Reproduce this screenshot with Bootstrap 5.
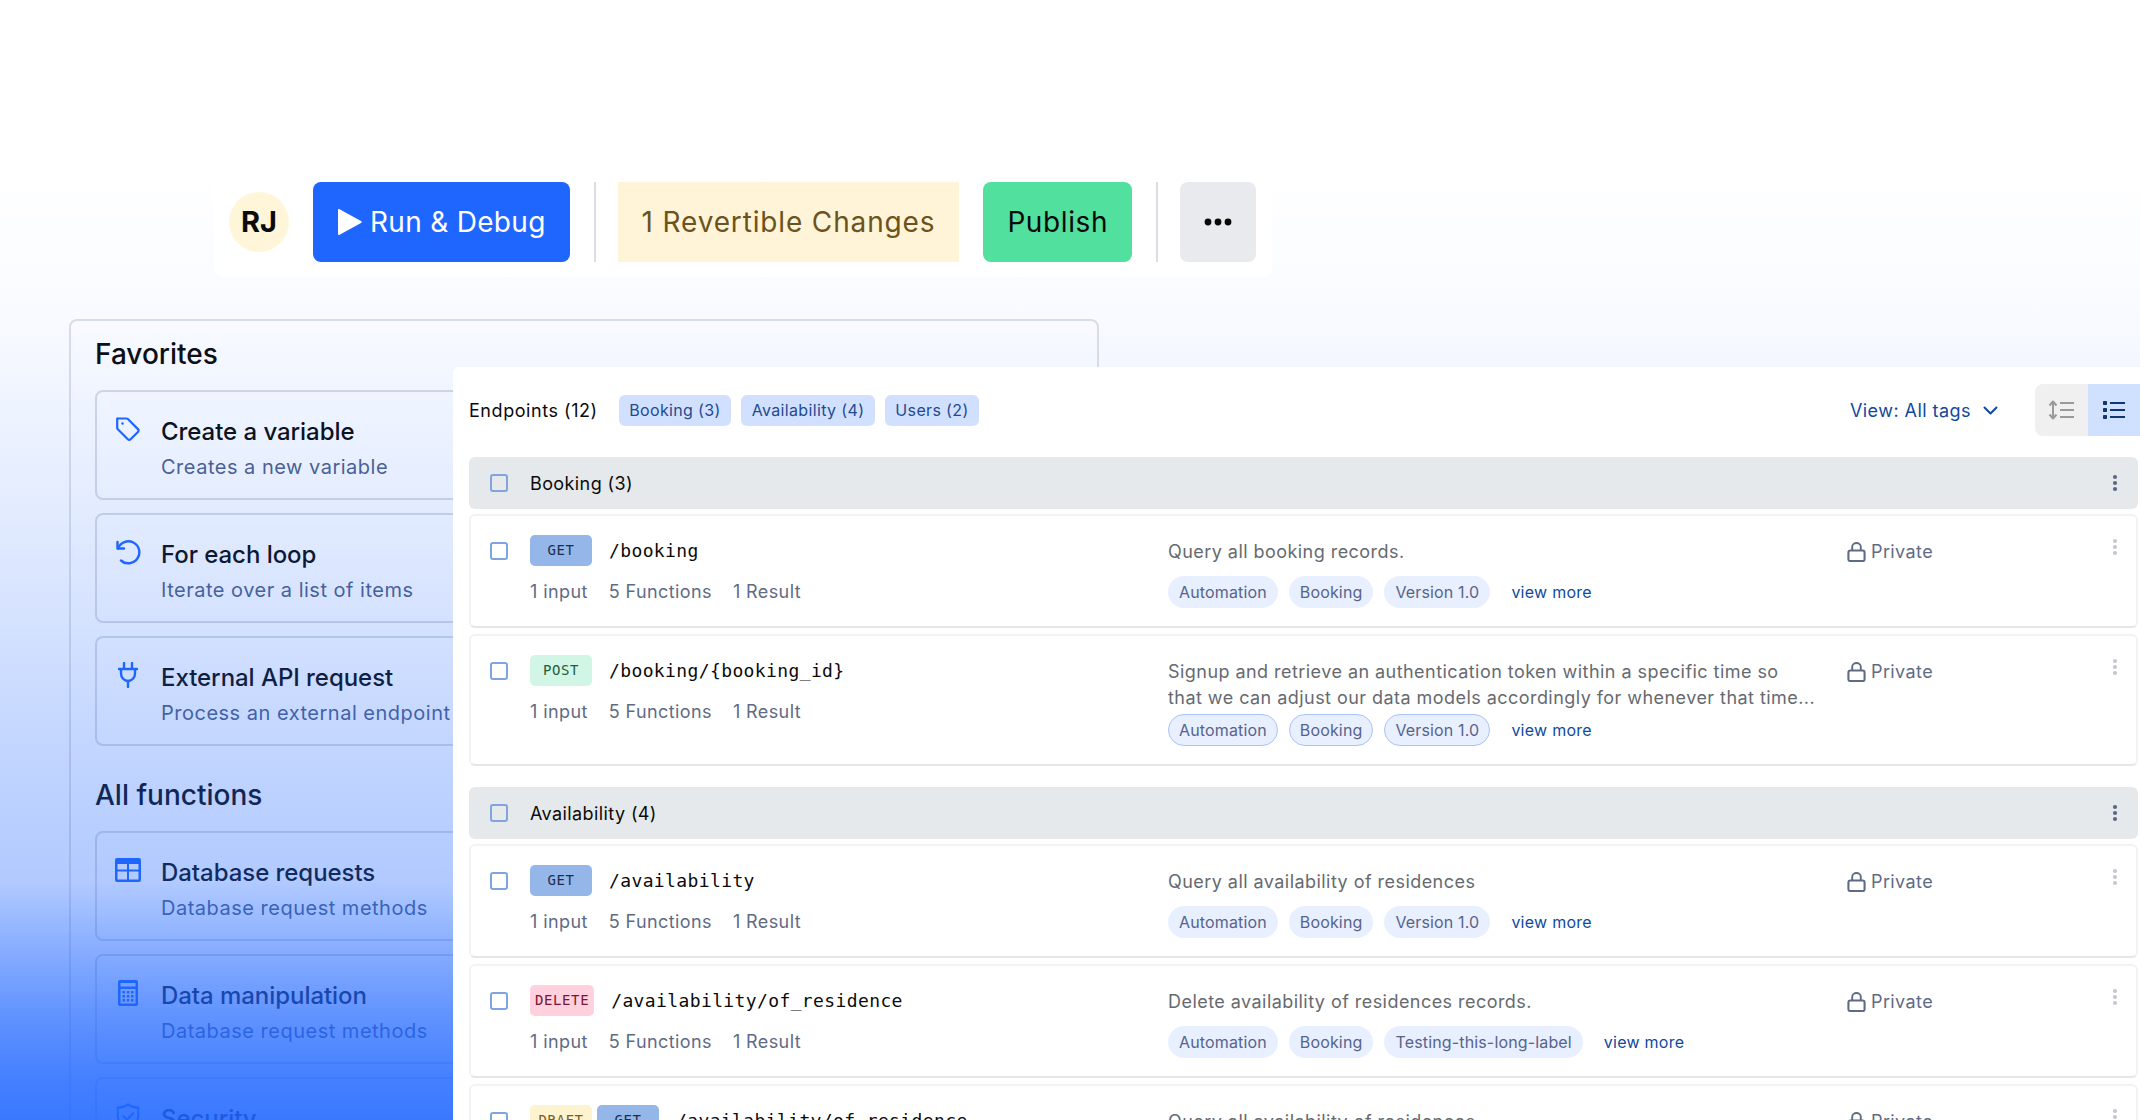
<!DOCTYPE html>
<html lang="en">
<head>
    <meta charset="UTF-8">
    <title>Endpoints</title>
    <link href="https://cdn.jsdelivr.net/npm/bootstrap@5.3.5/dist/css/bootstrap.min.css" rel="stylesheet">
    <style>
        body {
            margin: 0;
            background: #fff;
            font-family: 'Inter', sans-serif;
            color: #0b0b0b;
        }

        .app-frame {
            position: relative;
            height: 100vh;
            overflow: hidden;
        }

        /* blue fade that sits over the left panel */
        .fade-layer {
            position: absolute;
            inset: 0;
            z-index: 1;
            pointer-events: none;
            background: linear-gradient(180deg,
                rgba(31, 102, 255, 0) 15%,
                rgba(31, 102, 255, .03) 28.6%,
                rgba(31, 102, 255, .12) 44.6%,
                rgba(31, 102, 255, .19) 55.4%,
                rgba(31, 102, 255, .27) 66.5%,
                rgba(31, 102, 255, .35) 78.8%,
                rgba(31, 102, 255, .54) 85%,
                rgba(31, 102, 255, .71) 90.8%,
                rgba(31, 102, 255, .84) 96.7%,
                rgba(31, 102, 255, .88) 100%);
        }

        /* Toolbar */
        .top-bar {
            position: relative;
            z-index: 2;
            width: 1058px;
            margin: 182px 0 0 214px;
            padding: 0 15px 15px;
            gap: 24px;
            background: #fff;
            border-radius: 0 0 8px 8px;
        }

        .avatar-dot {
            width: 60px;
            height: 60px;
            border-radius: 50%;
            background: #fff6d9;
            font-size: 29px;
            font-weight: 700;
        }

        .bar-btn {
            height: 80px;
            padding: 0 24px;
            border: 0;
            border-radius: 8px;
            font-size: 28px;
            letter-spacing: .3px;
        }

        .bar-run {
            background: #1f66ff;
            color: #fff;
        }

        .bar-run:hover {
            background: #1f66ff;
            color: #fff;
        }

        .bar-revert {
            background: #fff4d7;
            color: #6b5320;
            border-radius: 0;
            letter-spacing: .85px;
        }

        .bar-publish {
            background: #51e09d;
            color: #0a0a0a;
            letter-spacing: .6px;
        }

        .bar-more {
            width: 76px;
            padding: 0;
            background: #e9eaee;
            color: #0a0a0a;
        }

        .bar-rule {
            width: 2px;
            height: 80px;
            margin-right: -2px;
            background: #dcdde2;
        }

        /* Left panel */
        .fn-panel {
            width: 1030px;
            margin: 42px 0 0 69px;
            padding: 15px 24px 0;
            border: 2px solid #dfe1e8;
            border-radius: 8px;
        }

        .fn-heading {
            margin: 0 0 18px;
            font-size: 28px;
            line-height: 36px;
            font-weight: 500;
        }

        .fn-heading-next {
            margin-top: 31px;
        }

        .fn-item {
            height: 110px;
            margin-bottom: 13px;
            padding: 24px 17px 0 18px;
            gap: 20px;
            border: 2px solid rgba(130, 140, 165, .3);
            border-radius: 8px;
        }

        .fn-icon {
            width: 26px;
            height: 26px;
            flex: none;
            color: #1f66ff;
        }

        .fn-title {
            font-size: 24px;
            line-height: 32px;
            font-weight: 500;
            letter-spacing: -.05px;
        }

        .fn-sub {
            margin-top: 7px;
            font-size: 20px;
            line-height: 24px;
            letter-spacing: .5px;
            color: #4f5f88;
        }

        /* Endpoint panel */
        .ep-panel {
            position: absolute;
            z-index: 2;
            left: 453px;
            top: 367px;
            right: 0;
            bottom: 0;
            overflow: hidden;
            padding: 17px 2px 0 16px;
            background: #fff;
            border-radius: 6px 0 0 0;
        }

        .ep-head {
            height: 52px;
            margin-right: -2px;
            margin-bottom: 21px;
            font-size: 18px;
        }

        .ep-count {
            margin-right: 21px;
            letter-spacing: .55px;
        }

        .tag-chip {
            height: 31px;
            margin-right: 10px;
            padding: 0 10.5px;
            border-radius: 6px;
            background: #d2e0ff;
            color: #1f4a8f;
            font-size: 16px;
            letter-spacing: .35px;
        }

        .view-pick {
            margin-right: 37px;
            color: #0f4a9e;
            letter-spacing: .45px;
        }

        .view-pick svg {
            margin-left: 12px;
        }

        .view-switch {
            width: 105px;
            height: 52px;
            overflow: hidden;
            border-radius: 8px 0 0 8px;
        }

        .view-switch span {
            flex: 1;
        }

        .switch-off {
            background: #f0f0f0;
            color: #9a9a9a;
        }

        .switch-on {
            background: #d0e0ff;
            color: #10366f;
        }

        .ep-group {
            height: 52px;
            margin-bottom: 5px;
            padding: 0 20px 0 21px;
            border-radius: 6px;
            background: #e5e9ec;
            font-size: 18px;
            letter-spacing: .4px;
        }

        .form-check-input.ep-tick {
            width: 18px;
            height: 18px;
            margin: 0 22px 0 0;
            flex: none;
            background-color: transparent;
            border: 2px solid #7fa4e0;
            border-radius: 3px;
        }

        .ep-row {
            min-height: 114px;
            margin-bottom: 6px;
            padding: 19px 18px 18px 19px;
            border: 2px solid #f3f3f4;
            border-bottom-color: #e6e6e8;
            border-radius: 6px;
            background: #fff;
        }

        .ep-row-last {
            margin-bottom: 21px;
        }

        .form-check-input.ep-tick.ep-tick-row {
            margin-top: 7px;
        }

        .ep-left {
            width: 638px;
            flex: none;
        }

        .ep-mid {
            width: 679px;
            flex: none;
            padding-top: 4px;
        }

        .ep-method {
            min-width: 62px;
            height: 31px;
            padding: 0 5px;
            border-radius: 5px;
            font-family: 'DejaVu Sans Mono', monospace;
            font-size: 14px;
            letter-spacing: .6px;
        }

        .m-get {
            background: #94b6e8;
            color: #1b2f4f;
        }

        .m-post {
            background: #d2f6e5;
            color: #1f5c3f;
        }

        .m-delete {
            background: #ffd0dd;
            color: #7a1538;
        }

        .m-draft {
            background: #fdf3cf;
            color: #7a5e20;
        }

        .ep-path {
            margin-left: 17px;
            font-family: 'DejaVu Sans Mono', monospace;
            font-size: 18px;
            letter-spacing: .38px;
        }

        .ep-method + .ep-method {
            margin-left: 5px;
        }

        .ep-stats {
            margin-top: 14px;
            gap: 21px;
            font-size: 18px;
            line-height: 24px;
            color: #5f6b85;
            letter-spacing: .4px;
        }

        .ep-desc {
            min-height: 37px;
            font-size: 18px;
            line-height: 26px;
            color: #666a70;
            letter-spacing: .45px;
        }

        .ep-desc-long {
            min-height: 55px;
        }

        .ep-tags {
            gap: 11px;
        }

        .ep-tag {
            height: 32px;
            padding: 0 10px;
            border-radius: 16px;
            border: 1px solid transparent;
            background: #e8efff;
            color: #56648a;
            font-size: 16px;
            letter-spacing: .15px;
        }

        .ep-tag-ring {
            border-color: #a9c4f7;
        }

        .ep-more {
            margin-left: 10px;
            color: #0f4a9e;
            font-size: 16px;
            letter-spacing: .25px;
            text-decoration: none;
        }

        .ep-private {
            padding-top: 4px;
            gap: 5px;
            font-size: 18px;
            line-height: 26px;
            color: #5f6b85;
            letter-spacing: .4px;
        }

        .ep-lock {
            margin-top: 3px;
        }

        .dots-dark {
            color: #5a6785;
        }

        .dots-light {
            color: #c4c8d0;
            margin-top: 3px;
        }
    </style>
</head>

<body>
    <svg width="0" height="0" class="position-absolute">
        <symbol id="i-lock" viewBox="0 0 20 21">
            <path d="M5.500 9V5a4.500 4 0 0 1 9 0V9" fill="none" stroke="currentColor" stroke-width="2"/>
            <rect x="1.500" y="9" width="17" height="11" rx="2" fill="none" stroke="currentColor" stroke-width="2.200"/>
        </symbol>
        <symbol id="i-dots" viewBox="0 0 6 18">
            <circle cx="3" cy="3" r="2.100" fill="currentColor"/>
            <circle cx="3" cy="9" r="2.100" fill="currentColor"/>
            <circle cx="3" cy="15" r="2.100" fill="currentColor"/>
        </symbol>
    </svg>

    <div class="app-frame">
        <div class="fade-layer"></div>

        <!-- Toolbar -->
        <div class="top-bar d-flex align-items-center">
            <div class="avatar-dot d-flex align-items-center justify-content-center">RJ</div>
            <button type="button" class="btn bar-btn bar-run d-flex align-items-center gap-2">
                <svg width="25" height="28" viewBox="0 0 25 28"><path d="M1 2v24a1 1 0 0 0 1.600.8L24 15a1.200 1.200 0 0 0 0-2L2.600 1.200A1 1 0 0 0 1 2z" fill="#fff"/></svg>
                Run &amp; Debug
            </button>
            <div class="bar-rule"></div>
            <button type="button" class="btn bar-btn bar-revert">1 Revertible Changes</button>
            <button type="button" class="btn bar-btn bar-publish">Publish</button>
            <div class="bar-rule"></div>
            <button type="button" class="btn bar-btn bar-more d-flex align-items-center justify-content-center">
                <svg width="28" height="8" viewBox="0 0 28 8"><circle cx="4" cy="4" r="3.400" fill="currentColor"/><circle cx="14" cy="4" r="3.400" fill="currentColor"/><circle cx="24" cy="4" r="3.400" fill="currentColor"/></svg>
            </button>
        </div>

        <!-- Functions panel -->
        <div class="fn-panel">
            <h2 class="fn-heading">Favorites</h2>

            <div class="fn-item d-flex">
                <svg class="fn-icon" viewBox="0 0 26 26" fill="none" stroke="currentColor" stroke-width="2.200" stroke-linejoin="round">
                    <path d="M3 2.500h8.500a2 2 0 0 1 1.400.6l10 10a2 2 0 0 1 0 2.800l-7.300 7.300a2 2 0 0 1-2.800 0l-10-10a2 2 0 0 1-.6-1.400V3a.5.5 0 0 1 .8-.5z"/>
                    <circle cx="7.500" cy="7.500" r="1.200" fill="currentColor" stroke="none"/>
                </svg>
                <div>
                    <div class="fn-title">Create a variable</div>
                    <div class="fn-sub">Creates a new variable</div>
                </div>
            </div>

            <div class="fn-item d-flex">
                <svg class="fn-icon" viewBox="0 0 26 26" fill="none" stroke="currentColor" stroke-width="2.400" stroke-linecap="round" stroke-linejoin="round">
                    <path d="M2.500 3v6.500H9"/>
                    <path d="M3 9.500A11 11 0 1 1 6 21.500a11 11 0 0 0 4 2.500"/>
                </svg>
                <div>
                    <div class="fn-title">For each loop</div>
                    <div class="fn-sub">Iterate over a list of items</div>
                </div>
            </div>

            <div class="fn-item d-flex">
                <svg class="fn-icon" viewBox="0 0 26 26" fill="none" stroke="currentColor" stroke-width="2.400" stroke-linecap="round">
                    <path d="M9 1v5M17 1v5M13 19v6"/>
                    <path d="M4 7h18M6 7v4.500a7 7.500 0 0 0 14 0V7"/>
                </svg>
                <div>
                    <div class="fn-title">External API request</div>
                    <div class="fn-sub">Process an external endpoint</div>
                </div>
            </div>

            <h2 class="fn-heading fn-heading-next">All functions</h2>

            <div class="fn-item d-flex">
                <svg class="fn-icon" viewBox="0 0 26 24">
                    <path fill-rule="evenodd" fill="currentColor" d="M2 0h22a2 2 0 0 1 2 2v20a2 2 0 0 1-2 2H2a2 2 0 0 1-2-2V2a2 2 0 0 1 2-2zM2.500 6v5.500H12V6zM14 6v5.500h9.500V6zM2.500 13.500V21.500H12v-8zM14 13.500v8h9.500v-8z"/>
                </svg>
                <div>
                    <div class="fn-title">Database requests</div>
                    <div class="fn-sub">Database request methods</div>
                </div>
            </div>

            <div class="fn-item d-flex">
                <svg class="fn-icon" viewBox="0 0 26 26">
                    <path fill-rule="evenodd" fill="currentColor" d="M5 0h16a2 2 0 0 1 2 2v22a2 2 0 0 1-2 2H5a2 2 0 0 1-2-2V2a2 2 0 0 1 2-2zM5.500 3v3.500h15V3zM5.500 9v14.500h15V9z"/>
                    <g fill="currentColor">
                        <rect x="7.500" y="11" width="2.500" height="2.500"/><rect x="11.800" y="11" width="2.500" height="2.500"/><rect x="16" y="11" width="2.500" height="2.500"/>
                        <rect x="7.500" y="15" width="2.500" height="2.500"/><rect x="11.800" y="15" width="2.500" height="2.500"/><rect x="16" y="15" width="2.500" height="2.500"/>
                        <rect x="7.500" y="19" width="2.500" height="2.500"/><rect x="11.800" y="19" width="2.500" height="2.500"/><rect x="16" y="19" width="2.500" height="2.500"/>
                    </g>
                </svg>
                <div>
                    <div class="fn-title">Data manipulation</div>
                    <div class="fn-sub">Database request methods</div>
                </div>
            </div>

            <div class="fn-item d-flex">
                <svg class="fn-icon" viewBox="0 0 26 28" fill="none" stroke="currentColor" stroke-width="2.200" stroke-linejoin="round" stroke-linecap="round">
                    <path d="M13 1.500c3 2.500 7 3.500 11 3.500v9c0 6-4.500 10-11 12.500C6.500 24 2 20 2 14V5c4 0 8-1 11-3.500z"/>
                    <path d="M8 14l4 4 6.500-7"/>
                </svg>
                <div>
                    <div class="fn-title">Security</div>
                    <div class="fn-sub">Security methods</div>
                </div>
            </div>
        </div>

        <!-- Endpoints -->
        <div class="ep-panel">
            <div class="ep-head d-flex align-items-center">
                <span class="ep-count">Endpoints (12)</span>
                <span class="tag-chip d-flex align-items-center">Booking (3)</span>
                <span class="tag-chip d-flex align-items-center">Availability (4)</span>
                <span class="tag-chip d-flex align-items-center">Users (2)</span>
                <span class="view-pick ms-auto d-flex align-items-center">View: All tags
                    <svg width="15" height="9" viewBox="0 0 15 9" fill="none" stroke="currentColor" stroke-width="2" stroke-linecap="round" stroke-linejoin="round"><path d="M1.500 1.500l6 6 6-6"/></svg>
                </span>
                <div class="view-switch d-flex">
                    <span class="switch-off d-flex align-items-center justify-content-center">
                        <svg width="26" height="20" viewBox="0 0 26 20" fill="none" stroke="currentColor" stroke-width="2"><path d="M12 3h14M12 10h14M12 17h14M5 2v16"/><path d="M1.500 5.500L5 1.500l3.500 4M1.500 14.500L5 18.500l3.500-4" stroke-linejoin="round"/></svg>
                    </span>
                    <span class="switch-on d-flex align-items-center justify-content-center">
                        <svg width="22" height="18" viewBox="0 0 22 18"><g fill="currentColor"><rect x="0" y="0" width="4" height="4" rx=".8"/><rect x="0" y="7" width="4" height="4" rx=".8"/><rect x="0" y="14" width="4" height="4" rx=".8"/><rect x="7" y="1" width="15" height="2"/><rect x="7" y="8" width="15" height="2"/><rect x="7" y="15" width="15" height="2"/></g></svg>
                    </span>
                </div>
            </div>

            <div class="ep-group d-flex align-items-center">
                <input class="form-check-input ep-tick" type="checkbox" aria-label="Select group">
                <span>Booking (3)</span>
                <svg class="dots-dark ms-auto" width="6" height="18"><use href="#i-dots"/></svg>
            </div>

            <div class="ep-row d-flex">
                <input class="form-check-input ep-tick ep-tick-row" type="checkbox" aria-label="Select row">
                <div class="ep-left">
                    <div class="d-flex align-items-center">
                        <span class="ep-method m-get d-flex align-items-center justify-content-center">GET</span>
                        <span class="ep-path">/booking</span>
                    </div>
                    <div class="ep-stats d-flex"><span>1 input</span><span>5 Functions</span><span>1 Result</span></div>
                </div>
                <div class="ep-mid">
                    <div class="ep-desc">Query all booking records.</div>
                    <div class="ep-tags d-flex align-items-center">
                        <span class="ep-tag d-flex align-items-center">Automation</span>
                        <span class="ep-tag d-flex align-items-center">Booking</span>
                        <span class="ep-tag d-flex align-items-center">Version 1.0</span>
                        <a class="ep-more" href="#">view more</a>
                    </div>
                </div>
                <div class="ep-private d-flex align-items-start"><svg class="ep-lock" width="19" height="20"><use href="#i-lock"/></svg>Private</div>
                <svg class="dots-light ms-auto" width="6" height="18"><use href="#i-dots"/></svg>
            </div>

            <div class="ep-row ep-row-last d-flex">
                <input class="form-check-input ep-tick ep-tick-row" type="checkbox" aria-label="Select row">
                <div class="ep-left">
                    <div class="d-flex align-items-center">
                        <span class="ep-method m-post d-flex align-items-center justify-content-center">POST</span>
                        <span class="ep-path">/booking/{booking_id}</span>
                    </div>
                    <div class="ep-stats d-flex"><span>1 input</span><span>5 Functions</span><span>1 Result</span></div>
                </div>
                <div class="ep-mid">
                    <div class="ep-desc ep-desc-long">Signup and retrieve an authentication token within a specific time so<br>that we can adjust our data models accordingly for whenever that time...</div>
                    <div class="ep-tags d-flex align-items-center">
                        <span class="ep-tag ep-tag-ring d-flex align-items-center">Automation</span>
                        <span class="ep-tag ep-tag-ring d-flex align-items-center">Booking</span>
                        <span class="ep-tag ep-tag-ring d-flex align-items-center">Version 1.0</span>
                        <a class="ep-more" href="#">view more</a>
                    </div>
                </div>
                <div class="ep-private d-flex align-items-start"><svg class="ep-lock" width="19" height="20"><use href="#i-lock"/></svg>Private</div>
                <svg class="dots-light ms-auto" width="6" height="18"><use href="#i-dots"/></svg>
            </div>

            <div class="ep-group d-flex align-items-center">
                <input class="form-check-input ep-tick" type="checkbox" aria-label="Select group">
                <span>Availability (4)</span>
                <svg class="dots-dark ms-auto" width="6" height="18"><use href="#i-dots"/></svg>
            </div>

            <div class="ep-row d-flex">
                <input class="form-check-input ep-tick ep-tick-row" type="checkbox" aria-label="Select row">
                <div class="ep-left">
                    <div class="d-flex align-items-center">
                        <span class="ep-method m-get d-flex align-items-center justify-content-center">GET</span>
                        <span class="ep-path">/availability</span>
                    </div>
                    <div class="ep-stats d-flex"><span>1 input</span><span>5 Functions</span><span>1 Result</span></div>
                </div>
                <div class="ep-mid">
                    <div class="ep-desc">Query all availability of residences</div>
                    <div class="ep-tags d-flex align-items-center">
                        <span class="ep-tag d-flex align-items-center">Automation</span>
                        <span class="ep-tag d-flex align-items-center">Booking</span>
                        <span class="ep-tag d-flex align-items-center">Version 1.0</span>
                        <a class="ep-more" href="#">view more</a>
                    </div>
                </div>
                <div class="ep-private d-flex align-items-start"><svg class="ep-lock" width="19" height="20"><use href="#i-lock"/></svg>Private</div>
                <svg class="dots-light ms-auto" width="6" height="18"><use href="#i-dots"/></svg>
            </div>

            <div class="ep-row d-flex">
                <input class="form-check-input ep-tick ep-tick-row" type="checkbox" aria-label="Select row">
                <div class="ep-left">
                    <div class="d-flex align-items-center">
                        <span class="ep-method m-delete d-flex align-items-center justify-content-center">DELETE</span>
                        <span class="ep-path">/availability/of_residence</span>
                    </div>
                    <div class="ep-stats d-flex"><span>1 input</span><span>5 Functions</span><span>1 Result</span></div>
                </div>
                <div class="ep-mid">
                    <div class="ep-desc">Delete availability of residences records.</div>
                    <div class="ep-tags d-flex align-items-center">
                        <span class="ep-tag d-flex align-items-center">Automation</span>
                        <span class="ep-tag d-flex align-items-center">Booking</span>
                        <span class="ep-tag d-flex align-items-center">Testing-this-long-label</span>
                        <a class="ep-more" href="#">view more</a>
                    </div>
                </div>
                <div class="ep-private d-flex align-items-start"><svg class="ep-lock" width="19" height="20"><use href="#i-lock"/></svg>Private</div>
                <svg class="dots-light ms-auto" width="6" height="18"><use href="#i-dots"/></svg>
            </div>

            <div class="ep-row d-flex">
                <input class="form-check-input ep-tick ep-tick-row" type="checkbox" aria-label="Select row">
                <div class="ep-left">
                    <div class="d-flex align-items-center">
                        <span class="ep-method m-draft d-flex align-items-center justify-content-center">DRAFT</span>
                        <span class="ep-method m-get d-flex align-items-center justify-content-center">GET</span>
                        <span class="ep-path">/availability/of_residence</span>
                    </div>
                    <div class="ep-stats d-flex"><span>1 input</span><span>5 Functions</span><span>1 Result</span></div>
                </div>
                <div class="ep-mid">
                    <div class="ep-desc">Query all availability of residences</div>
                </div>
                <div class="ep-private d-flex align-items-start"><svg class="ep-lock" width="19" height="20"><use href="#i-lock"/></svg>Private</div>
                <svg class="dots-light ms-auto" width="6" height="18"><use href="#i-dots"/></svg>
            </div>
        </div>
    </div>

    <script src="https://cdn.jsdelivr.net/npm/bootstrap@5.3.5/dist/js/bootstrap.bundle.min.js"></script>
</body>
</html>
